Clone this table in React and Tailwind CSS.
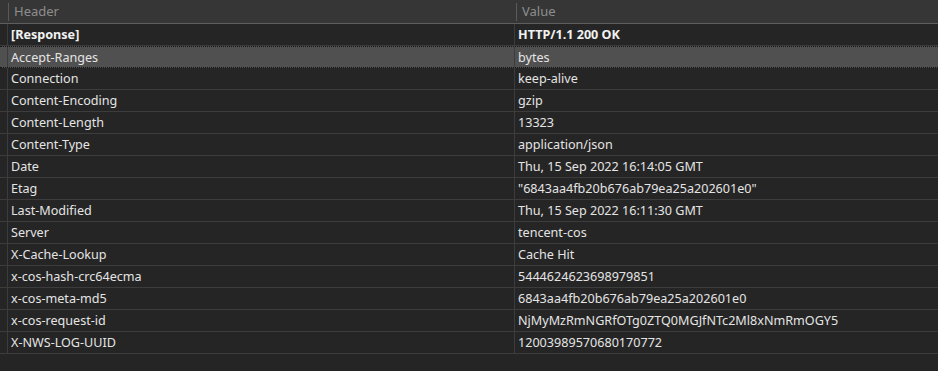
import React from "react";

const rows = [
  ["[Response]", "HTTP/1.1 200 OK", "bold"],
  ["Accept-Ranges", "bytes", "sel"],
  ["Connection", "keep-alive"],
  ["Content-Encoding", "gzip"],
  ["Content-Length", "13323"],
  ["Content-Type", "application/json"],
  ["Date", "Thu, 15 Sep 2022 16:14:05 GMT"],
  ["Etag", "\"6843aa4fb20b676ab79ea25a202601e0\""],
  ["Last-Modified", "Thu, 15 Sep 2022 16:11:30 GMT"],
  ["Server", "tencent-cos"],
  ["X-Cache-Lookup", "Cache Hit"],
  ["x-cos-hash-crc64ecma", "5444624623698979851"],
  ["x-cos-meta-md5", "6843aa4fb20b676ab79ea25a202601e0"],
  ["x-cos-request-id", "NjMyMzRmNGRfOTg0ZTQ0MGJfNTc2Ml8xNmRmOGY5"],
  ["X-NWS-LOG-UUID", "12003989570680170772"],
];

export default function App() {
  return (
    <div
      className="w-[938px] h-[371px] bg-[#252525] overflow-hidden text-[12.6px] text-[#e4e4e4] select-none"
      style={{ fontFamily: '"Noto Sans", "Open Sans", sans-serif' }}
    >
      {/* header */}
      <div className="flex h-[24px] bg-[#363636] border-b border-[#5e5e5e] text-[#8e8e8e] text-[13px]">
        <div className="w-[9px] shrink-0 flex items-center justify-end">
          <div className="w-px h-[18px] bg-[#5a5a5a]" />
        </div>
        <div className="w-[507px] shrink-0 flex items-center pl-[5px]">Header</div>
        <div className="w-px h-[18px] bg-[#5a5a5a] self-center" />
        <div className="flex-1 flex items-center pl-[5px]">Value</div>
      </div>
      {rows.map(([k, v, t]) => {
        const sel = t === "sel";
        const bold = t === "bold";
        return (
          <div
            key={k}
            className={
              sel
                ? "flex h-[22px] bg-[#505050] border-y border-dotted border-[#141414]"
                : "flex h-[22px] border-b border-[#3c3c3c]"
            }
          >
            <div className="w-[8px] shrink-0 border-r border-[#3c3c3c]" />
            <div
              className={
                "w-[507px] shrink-0 border-r border-[#3c3c3c] flex items-center pl-[3px] pt-[2px] " +
                (bold ? "font-bold text-[#f2f2f2]" : "")
              }
            >
              {k}
            </div>
            <div
              className={
                "flex-1 flex items-center pl-[3px] pt-[2px] " +
                (bold ? "font-bold text-[#f2f2f2]" : "")
              }
            >
              {v}
            </div>
          </div>
        );
      })}
    </div>
  );
}
